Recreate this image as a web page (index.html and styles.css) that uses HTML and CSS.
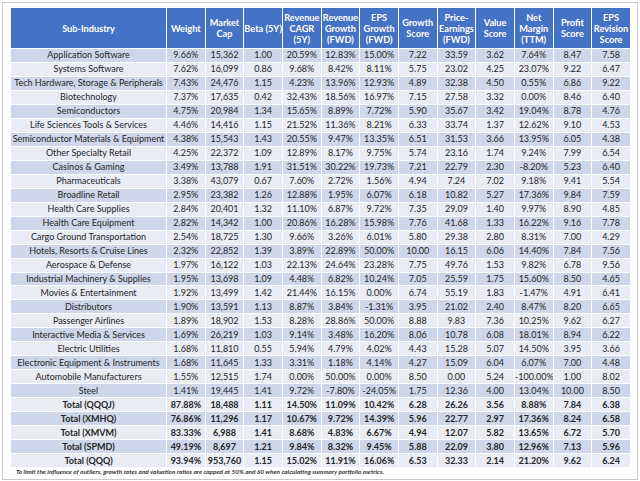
FILE: index.html
```html
<!DOCTYPE html>
<html lang="en">
<head>
<meta charset="utf-8">
<title>Sub-Industry Metrics</title>
<link rel="stylesheet" href="styles.css">
</head>
<body>
<div class="frame">
<table class="grid">
<colgroup>
<col class="c-name"><col><col><col><col><col><col><col><col><col><col><col><col>
</colgroup>
<thead>
<tr>
<th>Sub-Industry</th><th>Weight</th><th>Market Cap</th><th>Beta (5Y)</th><th>Revenue CAGR (5Y)</th><th>Revenue Growth (FWD)</th><th>EPS Growth (FWD)</th><th>Growth Score</th><th>Price-Earnings (FWD)</th><th>Value Score</th><th>Net Margin (TTM)</th><th>Profit Score</th><th>EPS Revision Score</th>
</tr>
</thead>
<tbody>
<tr><td>Application Software</td><td>9.66%</td><td>15,362</td><td>1.00</td><td>20.59%</td><td>12.83%</td><td>15.00%</td><td>7.22</td><td>33.59</td><td>3.62</td><td>7.64%</td><td>8.47</td><td>7.58</td></tr>
<tr><td>Systems Software</td><td>7.62%</td><td>16,099</td><td>0.86</td><td>9.68%</td><td>8.42%</td><td>8.11%</td><td>5.75</td><td>23.02</td><td>4.25</td><td>23.07%</td><td>9.22</td><td>6.47</td></tr>
<tr><td>Tech Hardware, Storage &amp; Peripherals</td><td>7.43%</td><td>24,476</td><td>1.15</td><td>4.23%</td><td>13.96%</td><td>12.93%</td><td>4.89</td><td>32.38</td><td>4.50</td><td>0.55%</td><td>6.86</td><td>9.22</td></tr>
<tr><td>Biotechnology</td><td>7.37%</td><td>17,635</td><td>0.42</td><td>32.43%</td><td>18.56%</td><td>16.97%</td><td>7.15</td><td>27.58</td><td>3.32</td><td>0.00%</td><td>8.46</td><td>6.40</td></tr>
<tr><td>Semiconductors</td><td>4.75%</td><td>20,984</td><td>1.34</td><td>15.65%</td><td>8.89%</td><td>7.72%</td><td>5.90</td><td>35.67</td><td>3.42</td><td>19.04%</td><td>8.78</td><td>4.76</td></tr>
<tr><td>Life Sciences Tools &amp; Services</td><td>4.46%</td><td>14,416</td><td>1.15</td><td>21.52%</td><td>11.36%</td><td>8.21%</td><td>6.33</td><td>33.74</td><td>1.37</td><td>12.62%</td><td>9.10</td><td>4.53</td></tr>
<tr><td>Semiconductor Materials &amp; Equipment</td><td>4.38%</td><td>15,543</td><td>1.43</td><td>20.55%</td><td>9.47%</td><td>13.35%</td><td>6.51</td><td>31.53</td><td>3.66</td><td>13.95%</td><td>6.05</td><td>4.38</td></tr>
<tr><td>Other Specialty Retail</td><td>4.25%</td><td>22,372</td><td>1.09</td><td>12.89%</td><td>8.17%</td><td>9.75%</td><td>5.74</td><td>23.16</td><td>1.74</td><td>9.24%</td><td>7.99</td><td>6.54</td></tr>
<tr><td>Casinos &amp; Gaming</td><td>3.49%</td><td>13,788</td><td>1.91</td><td>31.51%</td><td>30.22%</td><td>19.73%</td><td>7.21</td><td>22.79</td><td>2.30</td><td>-8.20%</td><td>5.23</td><td>6.40</td></tr>
<tr><td>Pharmaceuticals</td><td>3.38%</td><td>43,079</td><td>0.67</td><td>7.60%</td><td>2.72%</td><td>1.56%</td><td>4.94</td><td>7.24</td><td>7.02</td><td>9.18%</td><td>9.41</td><td>5.54</td></tr>
<tr><td>Broadline Retail</td><td>2.95%</td><td>23,382</td><td>1.26</td><td>12.88%</td><td>1.95%</td><td>6.07%</td><td>6.18</td><td>10.82</td><td>5.27</td><td>17.36%</td><td>9.84</td><td>7.59</td></tr>
<tr><td>Health Care Supplies</td><td>2.84%</td><td>20,401</td><td>1.32</td><td>11.10%</td><td>6.87%</td><td>9.72%</td><td>7.35</td><td>29.09</td><td>1.40</td><td>9.97%</td><td>8.90</td><td>4.85</td></tr>
<tr><td>Health Care Equipment</td><td>2.82%</td><td>14,342</td><td>1.00</td><td>20.86%</td><td>16.28%</td><td>15.98%</td><td>7.76</td><td>41.68</td><td>1.33</td><td>16.22%</td><td>9.16</td><td>7.78</td></tr>
<tr><td>Cargo Ground Transportation</td><td>2.54%</td><td>18,725</td><td>1.30</td><td>9.66%</td><td>3.26%</td><td>6.01%</td><td>5.80</td><td>29.38</td><td>2.80</td><td>8.31%</td><td>7.00</td><td>4.29</td></tr>
<tr><td>Hotels, Resorts &amp; Cruise Lines</td><td>2.32%</td><td>22,852</td><td>1.39</td><td>3.89%</td><td>22.89%</td><td>50.00%</td><td>10.00</td><td>16.15</td><td>6.06</td><td>14.40%</td><td>7.84</td><td>7.56</td></tr>
<tr><td>Aerospace &amp; Defense</td><td>1.97%</td><td>16,122</td><td>1.03</td><td>22.13%</td><td>24.64%</td><td>23.28%</td><td>7.75</td><td>49.76</td><td>1.53</td><td>9.82%</td><td>6.78</td><td>9.56</td></tr>
<tr><td>Industrial Machinery &amp; Supplies</td><td>1.95%</td><td>13,698</td><td>1.09</td><td>4.48%</td><td>6.82%</td><td>10.24%</td><td>7.05</td><td>25.59</td><td>1.75</td><td>15.60%</td><td>8.50</td><td>4.65</td></tr>
<tr><td>Movies &amp; Entertainment</td><td>1.92%</td><td>13,499</td><td>1.42</td><td>21.44%</td><td>16.15%</td><td>0.00%</td><td>6.74</td><td>55.19</td><td>1.83</td><td>-1.47%</td><td>4.91</td><td>6.41</td></tr>
<tr><td>Distributors</td><td>1.90%</td><td>13,591</td><td>1.13</td><td>8.87%</td><td>3.84%</td><td>-1.31%</td><td>3.95</td><td>21.02</td><td>2.40</td><td>8.47%</td><td>8.20</td><td>6.65</td></tr>
<tr><td>Passenger Airlines</td><td>1.89%</td><td>18,902</td><td>1.53</td><td>8.28%</td><td>28.86%</td><td>50.00%</td><td>8.88</td><td>9.83</td><td>7.36</td><td>10.25%</td><td>9.62</td><td>6.27</td></tr>
<tr><td>Interactive Media &amp; Services</td><td>1.69%</td><td>26,219</td><td>1.03</td><td>9.14%</td><td>3.48%</td><td>16.20%</td><td>8.06</td><td>10.78</td><td>6.08</td><td>18.01%</td><td>8.94</td><td>6.22</td></tr>
<tr><td>Electric Utilities</td><td>1.68%</td><td>11,810</td><td>0.55</td><td>5.94%</td><td>4.79%</td><td>4.02%</td><td>4.43</td><td>15.28</td><td>5.07</td><td>14.50%</td><td>3.95</td><td>3.66</td></tr>
<tr><td>Electronic Equipment &amp; Instruments</td><td>1.68%</td><td>11,645</td><td>1.33</td><td>3.31%</td><td>1.18%</td><td>4.14%</td><td>4.27</td><td>15.09</td><td>6.04</td><td>6.07%</td><td>7.00</td><td>4.48</td></tr>
<tr><td>Automobile Manufacturers</td><td>1.55%</td><td>12,515</td><td>1.74</td><td>0.00%</td><td>50.00%</td><td>0.00%</td><td>8.50</td><td>0.00</td><td>5.24</td><td>-100.00%</td><td>1.00</td><td>8.02</td></tr>
<tr><td>Steel</td><td>1.41%</td><td>19,445</td><td>1.41</td><td>9.72%</td><td>-7.80%</td><td>-24.05%</td><td>1.75</td><td>12.36</td><td>4.00</td><td>13.04%</td><td>10.00</td><td>8.50</td></tr>
<tr class="total"><td>Total (QQQJ)</td><td>87.88%</td><td>18,488</td><td>1.11</td><td>14.50%</td><td>11.09%</td><td>10.42%</td><td>6.28</td><td>26.26</td><td>3.56</td><td>8.88%</td><td>7.84</td><td>6.38</td></tr>
<tr class="total"><td>Total (XMHQ)</td><td>76.86%</td><td>11,296</td><td>1.17</td><td>10.67%</td><td>9.72%</td><td>14.39%</td><td>5.96</td><td>22.77</td><td>2.97</td><td>17.36%</td><td>8.24</td><td>6.58</td></tr>
<tr class="total"><td>Total (XMVM)</td><td>83.33%</td><td>6,988</td><td>1.41</td><td>8.68%</td><td>4.83%</td><td>6.67%</td><td>4.94</td><td>12.07</td><td>5.82</td><td>13.65%</td><td>6.72</td><td>5.70</td></tr>
<tr class="total"><td>Total (SPMD)</td><td>49.19%</td><td>8,697</td><td>1.21</td><td>9.84%</td><td>8.32%</td><td>9.45%</td><td>5.88</td><td>22.09</td><td>3.80</td><td>12.96%</td><td>7.13</td><td>5.96</td></tr>
<tr class="total"><td>Total (QQQ)</td><td>93.94%</td><td>953,760</td><td>1.15</td><td>15.02%</td><td>11.91%</td><td>16.06%</td><td>6.53</td><td>32.33</td><td>2.14</td><td>21.20%</td><td>9.62</td><td>6.24</td></tr>
</tbody>
</table>
<p class="note">To limit the influence of outliers, growth rates and valuation ratios are capped at 50% and 60 when calculating summary portfolio metrics.</p>
</div>
</body>
</html>
```

FILE: styles.css
```css
html, body {
  margin: 0;
  padding: 0;
  background: #ffffff;
}

.frame {
  box-sizing: border-box;
  margin: 2px 0 0 2px;
  width: 636px;
  height: 478px;
  border: 1px solid #c9c9c9;
  padding: 4px 0 0 7px;
  background: #ffffff;
  font-family: Lato, "Liberation Sans", sans-serif;
}

.grid {
  border-collapse: collapse;
  table-layout: fixed;
  width: 620px;
  color: #262626;
  font-size: 9px;
}

.grid col {
  width: 38.67px;
}

.grid col.c-name {
  width: 156px;
}

.grid th,
.grid td {
  border: 1px solid #ffffff;
  padding: 0;
  text-align: center;
  white-space: nowrap;
  overflow: hidden;
}

.grid th {
  background: #4472c4;
  color: #ffffff;
  font-weight: 700;
  font-size: 9.2px;
  line-height: 11px;
  white-space: normal;
  height: 40px;
}

.grid td {
  height: 12.98px;
  line-height: 12px;
}

.grid tbody tr:nth-child(odd) td {
  background: #cfd5ea;
}

.grid tbody tr:nth-child(even) td {
  background: #e9ebf5;
}

.grid tr.total td {
  font-weight: 700;
}

.note {
  margin: 0;
  padding: 0 0 0 6px;
  font-size: 6.4px;
  font-style: italic;
  font-weight: 700;
  color: #333333;
  line-height: 7px;
}
```
